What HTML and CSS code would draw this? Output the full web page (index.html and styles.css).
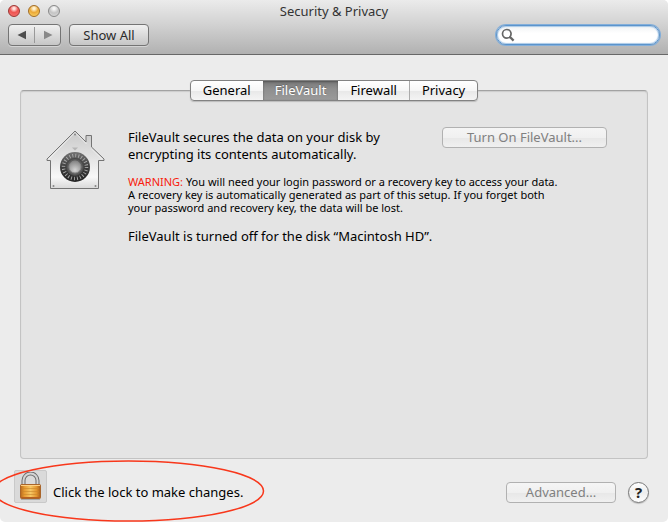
FILE: index.html
```html
<!DOCTYPE html>
<html lang="en">
<head>
    <meta charset="UTF-8">
    <meta name="viewport" content="width=device-width, initial-scale=1.0">
    <title>Security &amp; Privacy</title>
    <link rel="stylesheet" href="styles.css">
</head>
<body>
    <div class="window">
        <header class="titlebar">
            <div class="title-row">
                <div class="lights">
                    <button class="light red" aria-label="Close"></button>
                    <button class="light yellow" aria-label="Minimize"></button>
                    <button class="light gray" aria-label="Zoom"></button>
                </div>
                <h1 class="title">Security &amp; Privacy</h1>
            </div>
            <div class="toolbar">
                <div class="nav">
                    <button class="nav-button" aria-label="Back">
                        <svg width="10" height="10" viewBox="0 0 10 10"><path d="M0.5 5 9 0.8v8.4z" fill="#4d4d4d"/></svg>
                    </button>
                    <button class="nav-button" aria-label="Forward">
                        <svg width="10" height="10" viewBox="0 0 10 10"><path d="M9.5 5 1 0.8v8.4z" fill="#898989"/></svg>
                    </button>
                </div>
                <button class="show-all">Show All</button>
                <div class="search">
                    <svg class="search-icon" width="14" height="14" viewBox="0 0 14 14" fill="none" stroke="#666">
                        <circle cx="5.8" cy="5.8" r="4.3" stroke-width="1.7"/>
                        <path d="M9 9l3.6 3.6" stroke-width="2.3"/>
                    </svg>
                    <input type="search" class="search-input" aria-label="Search">
                </div>
            </div>
        </header>

        <main class="content">
            <div class="tabs" role="tablist">
                <button class="tab" role="tab">General</button>
                <button class="tab active" role="tab" aria-selected="true">FileVault</button>
                <button class="tab" role="tab">Firewall</button>
                <button class="tab" role="tab">Privacy</button>
            </div>

            <section class="panel">
                <svg class="house" width="60" height="62" viewBox="0 0 60 62">
                    <defs>
                        <linearGradient id="wall" x1="0" y1="0" x2="0" y2="1">
                            <stop offset="0" stop-color="#c9c9c9"/>
                            <stop offset="0.45" stop-color="#e2e2e2"/>
                            <stop offset="0.8" stop-color="#f8f8f8"/>
                            <stop offset="1" stop-color="#d8d8d8"/>
                        </linearGradient>
                        <linearGradient id="dial" x1="0" y1="0" x2="0" y2="1">
                            <stop offset="0" stop-color="#747474"/>
                            <stop offset="0.5" stop-color="#3d3d3d"/>
                            <stop offset="1" stop-color="#242424"/>
                        </linearGradient>
                        <radialGradient id="knob" cx="0.5" cy="0.75" r="0.7">
                            <stop offset="0" stop-color="#d4d4d4"/>
                            <stop offset="1" stop-color="#8a8a8a"/>
                        </radialGradient>
                    </defs>
                    <path d="M4.500 30.500v28h48v-28h5.500v-1.500L45.500 17V5.500h-5.500v6.500L29 1 1 29v1.500z" fill="url(#wall)" stroke="#747474"/>
                    <path d="M3 29 29 2.500 40.500 14M45 18.500 56 29" fill="none" stroke="#f4f4f4" stroke-opacity=".7"/>
                    <path d="M26 17.500h6l-3 3z" fill="#b5b5b5"/>
                    <circle cx="29" cy="37" r="15" fill="url(#dial)"/>
                    <circle cx="29" cy="37" r="11.500" fill="none" stroke="#aaa" stroke-width="3.500" stroke-dasharray="0.9 2.110"/>
                    <circle cx="29" cy="37" r="8.500" fill="#5c5c5c" stroke="#484848"/>
                    <circle cx="29" cy="37" r="6" fill="url(#knob)" stroke="#8b8b8b"/>
                    <g fill="#858585">
                        <circle cx="29" cy="4.500" r="1"/>
                        <circle cx="7.500" cy="56" r="1"/>
                        <circle cx="49.500" cy="56" r="1"/>
                    </g>
                </svg>

                <div class="details">
                    <div class="intro">
                        <p class="text">FileVault secures the data on your disk by<br>encrypting its contents automatically.</p>
                        <button class="push-button turn-on" disabled>Turn On FileVault...</button>
                    </div>
                    <p class="note"><span class="warning">WARNING:</span> You will need your login password or a recovery key to access your data.<br>A recovery key is automatically generated as part of this setup. If you forget both<br>your password and recovery key, the data will be lost.</p>
                    <p class="text">FileVault is turned off for the disk “Macintosh HD”.</p>
                </div>
            </section>
        </main>

        <footer class="footer">
            <!-- red marker around the lock row -->
            <svg class="marker" width="268" height="64" viewBox="0 0 268 64">
                <ellipse cx="128.500" cy="32" rx="135" ry="30" fill="none" stroke="#f8371b" stroke-width="1.500"/>
            </svg>
            <button class="lock" id="lock" aria-label="Unlock">
                <svg width="23" height="29" viewBox="0 0 23 29">
                    <defs>
                        <linearGradient id="brass" x1="0" y1="0" x2="1" y2="0">
                            <stop offset="0" stop-color="#b8691c"/>
                            <stop offset="0.2" stop-color="#e79b32"/>
                            <stop offset="0.5" stop-color="#f6c765"/>
                            <stop offset="0.8" stop-color="#e3952e"/>
                            <stop offset="1" stop-color="#a95d17"/>
                        </linearGradient>
                    </defs>
                    <path d="M4.500 14V8.500a7 7 0 0 1 14 0V14" fill="none" stroke="#6d6d6d" stroke-width="4"/>
                    <path d="M4.500 14V8.500a7 7 0 0 1 14 0V14" fill="none" stroke="#d4d4d4" stroke-width="2"/>
                    <rect x="1.500" y="12.500" width="20" height="14" rx="1" fill="url(#brass)" stroke="#a9652a"/>
                    <path d="M2 13.500h19" stroke="#ffd184"/>
                    <path d="M3 16.500h17M3 19.500h17M3 22.500h17" stroke="#c9852c" stroke-opacity=".6"/>
                    <path d="M2 25.500h19" stroke="#b85f20"/>
                    <path d="M2 27.500h19" stroke="#aaa"/>
                </svg>
            </button>
            <label class="lock-label" for="lock">Click the lock to make changes.</label>
            <button class="push-button advanced" disabled>Advanced...</button>
            <button class="help" aria-label="Help">?</button>
        </footer>
    </div>
</body>
</html>
```
FILE: styles.css
```css
* {
    margin: 0;
    padding: 0;
    box-sizing: border-box;
}

body {
    background: #fff;
    color: #000;
    font-family: "Lucida Grande", "Noto Sans", sans-serif;
    font-size: 13px;
    line-height: 17px;
}

button, input {
    font: inherit;
    color: inherit;
}

.window {
    display: flex;
    flex-direction: column;
    min-height: 100vh;
    background: #ececec;
    border-radius: 5px;
    overflow: hidden;
}

/* Title bar */
.titlebar {
    height: 55px;
    background: linear-gradient(#ebebeb, #d2d2d2 45%, #b1b1b1);
    border-bottom: 1px solid #686868;
}

.title-row {
    display: grid;
    grid-template-columns: 1fr auto 1fr;
    align-items: center;
    height: 22px;
    padding: 0 8px;
}

.lights {
    display: flex;
    gap: 8px;
}

.light {
    width: 12px;
    height: 12px;
    border: 1px solid #888;
    border-radius: 50%;
}

.red {
    background: radial-gradient(circle at 50% 25%, #ffe4e0 10%, #ee5552 45%, #f87875);
    border-color: #9c3532;
}

.yellow {
    background: radial-gradient(circle at 50% 25%, #fff3d4 10%, #eba938 45%, #ffdd70);
    border-color: #a16c25;
}

.gray {
    background: radial-gradient(circle at 50% 25%, #f7f7f7 10%, #c4c4c4 50%, #dedede);
}

.title {
    font-size: 13px;
    font-weight: normal;
    color: #333;
}

.toolbar {
    display: flex;
    align-items: center;
    gap: 8px;
    height: 26px;
    padding: 0 8px;
}

.nav,
.show-all {
    height: 22px;
    border: 1px solid #747474;
    border-radius: 4px;
    background: linear-gradient(#f0f0f0, #c6c6c6);
    box-shadow: 0 1px 0 #d5d5d5;
}

.nav {
    display: flex;
    align-items: center;
    width: 53px;
}

.nav-button {
    display: flex;
    flex: 1;
    align-items: center;
    justify-content: center;
    height: 16px;
    background: none;
    border: none;
}

.nav-button + .nav-button {
    border-left: 1px solid #999;
}

.show-all {
    width: 80px;
    color: #2b2b2b;
}

.search {
    display: flex;
    align-items: center;
    gap: 4px;
    width: 164px;
    height: 20px;
    margin-left: auto;
    padding: 0 8px 0 4px;
    background: linear-gradient(#f0f2f4, #fff 40%);
    border: 1px solid #5b94cc;
    border-radius: 10px;
    box-shadow: 0 0 0 1px #82aeda, inset 0 0 1px 1px #a9c9e8;
}

.search-icon {
    flex: none;
}

.search-input {
    width: 100%;
    min-width: 0;
    height: 17px;
    background: none;
    border: none;
    outline: none;
}

/* Tabs and pane */
.content {
    display: flex;
    flex: 1;
    flex-direction: column;
    padding: 25px 20px 0;
}

.tabs {
    z-index: 1;
    display: flex;
    align-self: center;
    margin-bottom: -11px;
    background: linear-gradient(#fff, #f6f6f6 50%, #e9e9e9 55%, #f4f4f4);
    border: 1px solid #828282;
    border-radius: 4px;
    box-shadow: 0 1px 1px #bbb;
}

.tab {
    height: 19px;
    padding: 0 12px;
    background: none;
    border: none;
}

.tab:last-child {
    border-left: 1px solid #aaa;
}

.active {
    color: #fff;
    background: linear-gradient(#767676, #8e8e8e 40%, #9a9a9a);
    box-shadow: inset 0 1px 2px #555;
    text-shadow: 0 -1px 1px #666;
}

.panel {
    display: flex;
    flex: 1;
    align-items: flex-start;
    padding: 36px 40px 40px 25px;
    background: #e4e4e4;
    border: 1px solid #c3c3c3;
    border-top: 1px solid #a2a2a2;
    border-radius: 4px;
    box-shadow: inset 0 1px 1px #cbcbcb;
}

.house {
    flex: none;
    margin: 3px 22px 0 0;
}

.details {
    flex: 1;
}

.intro {
    display: flex;
    align-items: flex-start;
    justify-content: space-between;
    margin-bottom: 12px;
}

.intro .text {
    padding-top: 2px;
}

.note {
    margin-bottom: 14px;
    font-size: 11px;
    line-height: 13px;
}

.warning {
    color: #f8200c;
}

.push-button {
    height: 21px;
    background: linear-gradient(#f5f5f5, #f0f0f0 50%, #e8e8e8 55%, #f0f0f0);
    border: 1px solid #b1b1b1;
    border-radius: 4px;
    color: #808080;
}

.turn-on {
    width: 165px;
}

/* Bottom row */
.footer {
    position: relative;
    display: flex;
    align-items: center;
    height: 63px;
    padding: 4px 19px 0 14px;
}

.marker {
    position: absolute;
    left: 0;
    bottom: -1px;
    pointer-events: none;
}

.lock {
    display: flex;
    align-items: center;
    justify-content: center;
    width: 33px;
    height: 33px;
    margin: 0 6px 12px 0;
    background: #dadada;
    border: 1px solid #c9c9c9;
    border-radius: 2px;
}

.advanced {
    width: 110px;
    margin-left: auto;
}

.help {
    width: 21px;
    height: 21px;
    margin-left: 12px;
    background: linear-gradient(#fff, #ededed 50%, #fff);
    border: 1px solid #777;
    border-radius: 50%;
    box-shadow: 0 1px 1px #bbb;
    color: #222;
    font-size: 15px;
    font-weight: bold;
    line-height: 17px;
}
```
